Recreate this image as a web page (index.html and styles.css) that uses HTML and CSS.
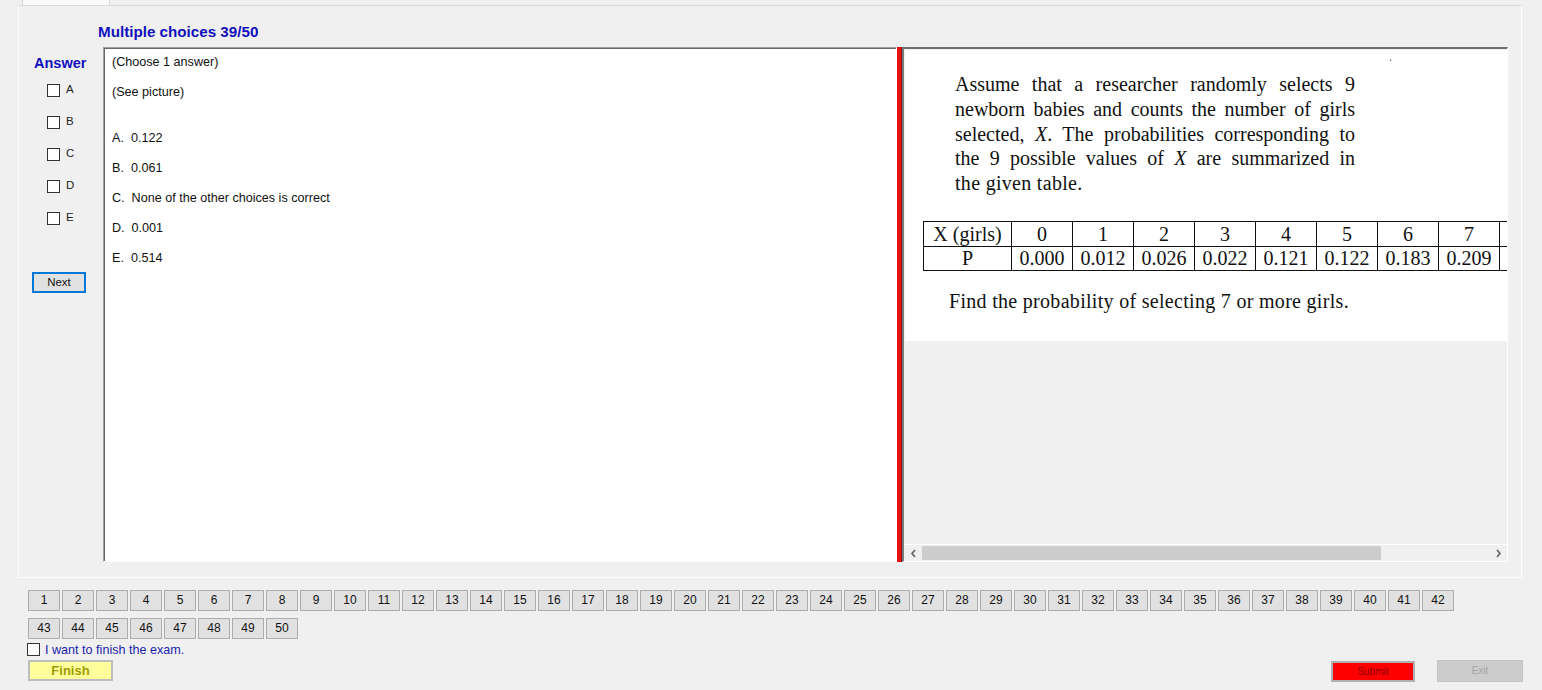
FILE: index.html
```html
<!DOCTYPE html>
<html>
<head>
<meta charset="utf-8">
<link rel="stylesheet" href="styles.css">
</head>
<body>
<div class="tabstrip"><div class="tab"></div></div>
<div class="tabpage">
  <div class="title">Multiple choices 39/50</div>
  <div class="main">
    <div class="answers">
      <div class="answer-label">Answer</div>
      <div class="options">
        <div class="opt"><span class="cb"></span><span class="opt-l">A</span></div>
        <div class="opt"><span class="cb"></span><span class="opt-l">B</span></div>
        <div class="opt"><span class="cb"></span><span class="opt-l">C</span></div>
        <div class="opt"><span class="cb"></span><span class="opt-l">D</span></div>
        <div class="opt"><span class="cb"></span><span class="opt-l">E</span></div>
      </div>
      <div class="next">Next</div>
    </div>
    <div class="question">
      <p class="q">(Choose 1 answer)</p>
      <p class="q gap">(See picture)</p>
      <p class="q">A.&nbsp; 0.122</p>
      <p class="q">B.&nbsp; 0.061</p>
      <p class="q">C.&nbsp; None of the other choices is correct</p>
      <p class="q">D.&nbsp; 0.001</p>
      <p class="q">E.&nbsp; 0.514</p>
    </div>
    <div class="splitter"></div>
    <div class="picture">
      <div class="viewport">
        <div class="image">
          <span class="dot">.</span>
          <div class="para">
            <span class="line">Assume that a researcher randomly selects 9</span>
            <span class="line">newborn babies and counts the number of girls</span>
            <span class="line">selected, <i>X</i>. The probabilities corresponding to</span>
            <span class="line">the 9 possible values of <i>X</i> are summarized in</span>
            <span class="line last">the given table.</span>
          </div>
          <table class="ptable">
            <tr><td class="first">X (girls)</td><td>0</td><td>1</td><td>2</td><td>3</td><td>4</td><td>5</td><td>6</td><td>7</td><td></td></tr>
            <tr><td class="first">P</td><td>0.000</td><td>0.012</td><td>0.026</td><td>0.022</td><td>0.121</td><td>0.122</td><td>0.183</td><td>0.209</td><td></td></tr>
          </table>
          <div class="find">Find the probability of selecting 7 or more girls.</div>
        </div>
      </div>
      <div class="hscroll">
        <span class="arrow"><svg width="7" height="9" viewBox="0 0 7 9"><path d="M5 1 L2 4.5 L5 8" fill="none" stroke="#606060" stroke-width="1.6"/></svg></span>
        <div class="track"><div class="thumb"></div></div>
        <span class="arrow"><svg width="7" height="9" viewBox="0 0 7 9"><path d="M2 1 L5 4.5 L2 8" fill="none" stroke="#606060" stroke-width="1.6"/></svg></span>
      </div>
    </div>
  </div>
</div>
<div class="bottom">
  <div class="nums">
    <span class="nb">1</span><span class="nb">2</span><span class="nb">3</span><span class="nb">4</span><span class="nb">5</span><span class="nb">6</span><span class="nb">7</span><span class="nb">8</span><span class="nb">9</span><span class="nb">10</span><span class="nb">11</span><span class="nb">12</span><span class="nb">13</span><span class="nb">14</span><span class="nb">15</span><span class="nb">16</span><span class="nb">17</span><span class="nb">18</span><span class="nb">19</span><span class="nb">20</span><span class="nb">21</span><span class="nb">22</span><span class="nb">23</span><span class="nb">24</span><span class="nb">25</span><span class="nb">26</span><span class="nb">27</span><span class="nb">28</span><span class="nb">29</span><span class="nb">30</span><span class="nb">31</span><span class="nb">32</span><span class="nb">33</span><span class="nb">34</span><span class="nb">35</span><span class="nb">36</span><span class="nb">37</span><span class="nb">38</span><span class="nb">39</span><span class="nb">40</span><span class="nb">41</span><span class="nb">42</span>
  </div>
  <div class="nums row2">
    <span class="nb">43</span><span class="nb">44</span><span class="nb">45</span><span class="nb">46</span><span class="nb">47</span><span class="nb">48</span><span class="nb">49</span><span class="nb">50</span>
  </div>
  <div class="finish-check"><span class="cb cb2"></span><span class="fc-label">I want to finish the exam.</span></div>
  <div class="actions">
    <div class="finish">Finish</div>
    <div class="right-actions">
      <div class="submit">Submit</div>
      <div class="exit">Exit</div>
    </div>
  </div>
</div>
</body>
</html>
```
FILE: styles.css
```css
* { box-sizing: border-box; }
html, body { margin: 0; padding: 0; }
body {
  width: 1542px;
  height: 690px;
  overflow: hidden;
  background: #f0f0f0;
  font-family: "Liberation Sans", Arial, sans-serif;
  font-size: 12px;
  color: #000;
}
.tabstrip { height: 5px; padding-left: 22px; }
.tab {
  width: 88px;
  height: 5px;
  background: #fafafa;
  border: 1px solid #d6d6d6;
  border-top: none;
  border-bottom: none;
}
.tabpage {
  margin-left: 18px;
  width: 1504px;
  height: 573px;
  border: 1px solid #fdfdfd;
  border-top-color: #dcdcdc;
  padding-top: 18px;
}
.title {
  height: 16px;
  line-height: 16px;
  margin: 0 0 7px 79px;
  font-weight: bold;
  font-size: 15.2px;
  color: #1010bc;
}
.main {
  display: flex;
  height: 515px;
}
.answers {
  width: 84px;
  display: flex;
  flex-direction: column;
  padding-top: 8px;
}
.answer-label {
  height: 16px;
  line-height: 16px;
  padding-left: 15px;
  font-weight: bold;
  font-size: 14.5px;
  color: #1010bc;
}
.options {
  margin-top: 13px;
  padding-left: 28px;
  display: flex;
  flex-direction: column;
  gap: 19px;
}
.opt { display: flex; align-items: flex-start; height: 13px; }
.cb {
  display: inline-block;
  width: 13px;
  height: 13px;
  border: 1px solid #333;
  background: #fff;
}
.opt-l {
  margin-left: 6px;
  font-size: 11.5px;
  line-height: 11px;
  color: #222;
}
.next {
  margin-top: 47px;
  margin-left: 13px;
  width: 54px;
  height: 21px;
  line-height: 19px;
  text-align: center;
  border: 1px solid #0078d7;
  box-shadow: inset 0 0 0 1px #0078d7;
  background: #e1e1e1;
  font-size: 11.5px;
  color: #111;
}
.question {
  width: 794px;
  height: 515px;
  background: #fff;
  border: 1px solid;
  border-color: #a0a0a0 #fff #fff #a0a0a0;
  box-shadow: inset 1px 1px 0 #696969;
  padding: 7px 0 0 8px;
}
.q {
  margin: 0 0 16px 0;
  height: 14px;
  line-height: 14px;
  font-size: 12.6px;
  color: #111;
}
.q.gap { margin-bottom: 32px; }
.splitter {
  width: 5px;
  height: 515px;
  background: #e81212;
  border-right: 1px solid #8a1010;
}
.picture {
  width: 606px;
  height: 515px;
  display: flex;
  flex-direction: column;
  border-top: 2px solid #6e6e6e;
  border-left: 2px solid #7a7a7a;
  border-right: 1px solid #fff;
  border-bottom: 1px solid #fff;
  padding-left: 1px;
}
.viewport {
  flex: 1;
  overflow: hidden;
  background: #f0f0f0;
  padding-top: 1px;
}
.image {
  position: relative;
  width: 745px;
  height: 291px;
  background: #fff;
  font-family: "Liberation Serif", "Times New Roman", serif;
  font-size: 20px;
  color: #111;
}
.dot {
  position: absolute;
  left: 484px;
  top: 0px;
  font-size: 12px;
  color: #555;
}
.para {
  position: absolute;
  left: 50px;
  top: 22px;
  width: 400px;
  line-height: 24.75px;
}
.line {
  display: block;
  text-align: justify;
  text-align-last: justify;
  white-space: nowrap;
  height: 24.75px;
}
.line.last { text-align-last: left; letter-spacing: 0.3px; }
.ptable {
  position: absolute;
  left: 18px;
  top: 171px;
  border-collapse: collapse;
  font-size: 20px;
  line-height: 22px;
}
.ptable td {
  border: 1px solid #111;
  width: 61px;
  height: 24.5px;
  padding: 0;
  text-align: center;
}
.ptable td.first { width: 88px; }
.find {
  position: absolute;
  left: 44px;
  top: 239px;
  line-height: 24px;
  letter-spacing: 0.3px;
}
.hscroll {
  height: 17px;
  display: flex;
  align-items: center;
  background: #f0f0f0;
  border-top: 1px solid #fff;
}
.arrow {
  width: 17px;
  height: 14px;
  display: flex;
  align-items: center;
  justify-content: center;
}
.track { flex: 1; height: 14px; }
.thumb {
  width: 459px;
  height: 14px;
  background: #cdcdcd;
}
.bottom {
  padding: 12px 19px 0 28px;
}
.nums { display: flex; gap: 2px; height: 21px; }
.row2 { margin-top: 7px; }
.nb {
  width: 32px;
  height: 21px;
  line-height: 19px;
  text-align: center;
  background: #e1e1e1;
  border: 1px solid #adadad;
  font-size: 12px;
  color: #111;
}
.finish-check {
  margin-top: 3px;
  margin-left: -1px;
  display: flex;
  align-items: center;
  height: 14px;
}
.cb2 { width: 13px; height: 13px; }
.fc-label {
  margin-left: 5px;
  font-size: 12.6px;
  color: #1c1cac;
  line-height: 14px;
  margin-top: 1px;
}
.actions {
  margin-top: 4px;
  display: flex;
  justify-content: space-between;
  align-items: flex-start;
}
.finish {
  width: 85px;
  height: 21px;
  line-height: 17px;
  text-align: center;
  background: #ffff9c;
  border: 2px solid #bdbdbd;
  font-weight: bold;
  font-size: 13px;
  color: #9c9c00;
}
.right-actions { display: flex; gap: 22px; align-items: flex-start; }
.submit {
  width: 84px;
  height: 21px;
  margin-top: 1px;
  line-height: 17px;
  text-align: center;
  background: #ff0000;
  border: 2px solid #b0b0b0;
  font-size: 10px;
  color: #8a0000;
}
.exit {
  width: 86px;
  height: 22px;
  line-height: 20px;
  text-align: center;
  background: #cccccc;
  border: 1px solid #c4c4c4;
  font-size: 10px;
  color: #a4a4a4;
}
```
